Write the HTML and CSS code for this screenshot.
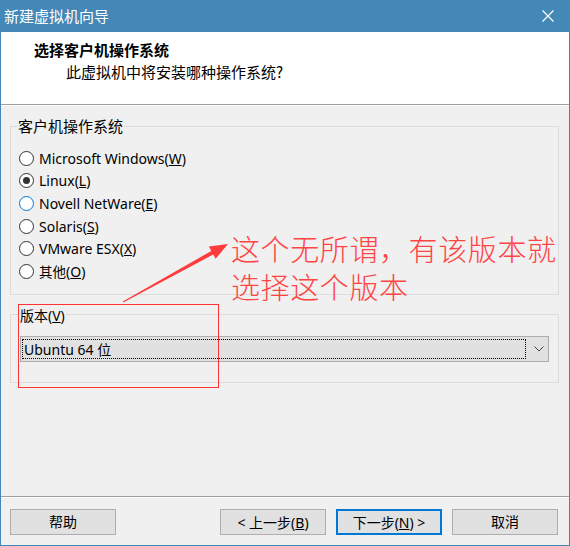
FILE: index.html
```html
<!DOCTYPE html>
<html lang="zh-CN">
<head>
<meta charset="utf-8">
<title>新建虚拟机向导</title>
<link rel="stylesheet" href="styles.css">
</head>
<body>
<div class="window">
  <div class="titlebar">
    <span class="title cjk">新建虚拟机向导</span>
    <svg class="close" width="12" height="12" viewBox="0 0 12 12"><path d="M0.5 0.5 L11.5 11.5 M11.5 0.5 L0.5 11.5" stroke="#fff" stroke-width="1.2" fill="none"/></svg>
  </div>
  <div class="header">
    <div class="h-title cjk">选择客户机操作系统</div>
    <div class="h-sub cjk">此虚拟机中将安装哪种操作系统?</div>
  </div>
  <div class="content">
    <fieldset class="group group-os">
      <legend class="cjk">客户机操作系统</legend>
      <div class="radios">
        <div class="radio-row"><span class="radio"></span><span>Microsoft Windows(<u>W</u>)</span></div>
        <div class="radio-row"><span class="radio checked"></span><span>Linux(<u>L</u>)</span></div>
        <div class="radio-row"><span class="radio hover"></span><span>Novell NetWare(<u>E</u>)</span></div>
        <div class="radio-row"><span class="radio"></span><span>Solaris(<u>S</u>)</span></div>
        <div class="radio-row"><span class="radio"></span><span>VMware ESX(<u>X</u>)</span></div>
        <div class="radio-row"><span class="radio"></span><span><span class="cjk-sm">其他</span>(<u>O</u>)</span></div>
      </div>
    </fieldset>
    <fieldset class="group group-ver">
      <legend><span class="cjk-md">版本</span>(<u>V</u>)</legend>
      <div class="combo">
        <div class="combo-focus">Ubuntu 64 <span class="cjk-md">位</span></div>
        <svg class="chev" width="10" height="6" viewBox="0 0 10 6"><polyline points="0.5,0.5 5,5 9.5,0.5" fill="none" stroke="#444" stroke-width="1"/></svg>
      </div>
    </fieldset>

    <div class="note-box"></div>
    <svg class="note-arrow" width="570" height="546" viewBox="0 0 570 546">
      <polygon points="228,244 215.6,258.8 213.2,254.45 123.24,302.44 122.76,301.56 211.3,250.95 208.9,246.6" fill="#ff3c3c"/>
    </svg>
    <div class="note-text">
      <div>这个无所谓，有该版本就</div>
      <div>选择这个版本</div>
    </div>
  </div>
  <div class="footer">
    <button class="btn cjk-btn">帮助</button>
    <div class="spacer"></div>
    <button class="btn">&lt; <span class="cjk-btn">上一步</span>(<u>B</u>)</button>
    <button class="btn primary"><span class="cjk-btn">下一步</span>(<u>N</u>) &gt;</button>
    <button class="btn cjk-btn">取消</button>
  </div>
</div>
</body>
</html>
```

FILE: styles.css
```css
html, body {
  margin: 0;
  padding: 0;
  background: #fff;
}
body {
  font-family: "Noto Sans", "Noto Sans CJK SC", sans-serif;
  font-size: 14px;
  color: #000;
}
.window {
  position: relative;
  width: 570px;
  height: 546px;
  box-sizing: border-box;
  border: 1px solid #4488b8;
  border-top: 0;
  background: #f0f0f0;
  display: flex;
  flex-direction: column;
  overflow: hidden;
}
.cjk {
  font-family: "Noto Sans CJK SC", sans-serif;
  font-size: 15px;
}
.cjk-md {
  font-family: "Noto Sans CJK SC", sans-serif;
  font-size: 14px;
}
.cjk-sm {
  font-family: "Noto Sans CJK SC", sans-serif;
  font-size: 13.5px;
}
.cjk-btn {
  font-family: "Noto Sans CJK SC", sans-serif;
  font-size: 14px;
}
.titlebar {
  height: 32px;
  margin: 0 -1px;
  background: #4488b8;
  display: flex;
  align-items: center;
  justify-content: space-between;
  padding: 0 16px 0 4px;
  color: #fff;
  flex-shrink: 0;
}
.title {
  line-height: 20px;
}
.close {
  display: block;
}
.header {
  height: 73px;
  background: #fff;
  border-bottom: 1px solid #a0a0a0;
  box-shadow: 0 1px 0 #fff;
  padding: 8px 0 0 33px;
  box-sizing: border-box;
  flex-shrink: 0;
}
.h-title {
  font-weight: bold;
  line-height: 20px;
}
.h-sub {
  line-height: 20px;
  margin-top: 2px;
  padding-left: 32px;
}
.content {
  position: relative;
  flex: 1;
  padding: 12px 10px 0 9px;
}
.group {
  margin: 0;
  border: 1px solid #dcdcdc;
  padding: 0 8px 0 8px;
}
.group legend {
  padding: 0 1px;
  margin-left: -2px;
  line-height: 18px;
  height: 18px;
}
.group-os {
  padding-bottom: 11px;
}
.radios {
  padding-top: 12px;
}
.radio-row {
  height: 22.6px;
  display: flex;
  align-items: center;
  gap: 5px;
  white-space: nowrap;
}
.radio {
  width: 15px;
  height: 15px;
  box-sizing: border-box;
  border: 1px solid #333;
  border-radius: 50%;
  background: #fff;
  display: flex;
  align-items: center;
  justify-content: center;
  flex-shrink: 0;
}
.radio.checked::after {
  content: "";
  width: 7px;
  height: 7px;
  border-radius: 50%;
  background: #333;
}
.radio.hover {
  border-color: #0078d7;
}
.group-ver {
  margin-top: 11px;
  padding: 12px 9px 20px 9px;
}
.group-ver legend {
  margin-left: -1px;
}
.combo {
  height: 26px;
  box-sizing: border-box;
  border: 1px solid #adadad;
  background: #e1e1e1;
  display: flex;
  align-items: center;
  padding: 2px 0 2px 1px;
}
.combo-focus {
  flex: 0 0 504px;
  height: 20px;
  box-sizing: border-box;
  border: 1px dotted #000;
  line-height: 18px;
  padding-left: 1px;
}
.chev {
  margin-left: 8px;
  display: block;
}
.note-box {
  position: absolute;
  left: 17px;
  top: 199px;
  width: 199px;
  height: 82px;
  border: 1px solid #ff3333;
}
.note-arrow {
  position: absolute;
  left: -1px;
  top: -105px;
  pointer-events: none;
}
.note-text {
  position: absolute;
  left: 230px;
  top: 124px;
  color: #ff4444;
  font-family: "Noto Sans CJK SC", sans-serif;
  font-weight: 300;
  font-size: 29px;
  line-height: 38px;
  letter-spacing: 0.6px;
  white-space: nowrap;
}
.footer {
  flex-shrink: 0;
  height: 49px;
  border-top: 1px solid #a0a0a0;
  box-shadow: inset 0 1px 0 #fff;
  display: flex;
  align-items: flex-start;
  padding: 12px 11px 0 9px;
  gap: 10px;
  box-sizing: border-box;
}
.spacer {
  flex: 1;
}
.btn {
  width: 106px;
  height: 26px;
  box-sizing: border-box;
  border: 1px solid #adadad;
  background: #e1e1e1;
  font-family: "Noto Sans", "Noto Sans CJK SC", sans-serif;
  font-size: 14px;
  color: #000;
  padding: 0;
  margin: 0;
  line-height: 22px;
  white-space: nowrap;
}
.btn.primary {
  border: 2px solid #0078d7;
}
```
